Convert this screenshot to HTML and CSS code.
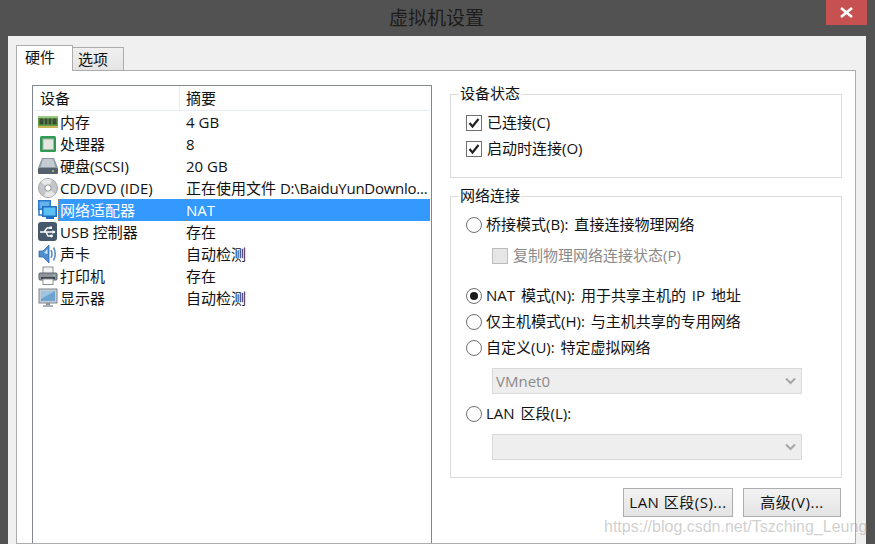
FILE: index.html
```html
<!DOCTYPE html>
<html lang="zh-CN">
<head>
<meta charset="utf-8">
<title>虚拟机设置</title>
<link rel="stylesheet" href="styles.css">
</head>
<body>
<header class="titlebar">
  <div class="title">虚拟机设置</div>
  <div class="close"><svg width="15" height="11" viewBox="0 0 15 11"><path d="M2 1 L13 10 M13 1 L2 10" stroke="#fff" stroke-width="2.6" fill="none"/></svg></div>
</header>
<main class="dialog">
  <nav class="tabs">
    <div class="tab active">硬件</div>
    <div class="tab">选项</div>
  </nav>
  <section class="pane">
    <div class="list">
      <div class="list-head"><div class="h1">设备</div><div class="h2">摘要</div></div>
      <div class="row">
        <svg class="icon" viewBox="0 0 20 20"><rect x="0" y="4" width="20" height="12" fill="#5fa043"/><rect x="0" y="4" width="20" height="2" fill="#9cc97f"/><rect x="1.500" y="6.500" width="4" height="6" fill="#3d4a3a"/><rect x="6.500" y="6.500" width="3" height="6" fill="#3d4a3a"/><rect x="10.500" y="6.500" width="3" height="6" fill="#3d4a3a"/><rect x="14.500" y="6.500" width="4" height="6" fill="#3d4a3a"/><rect x="0" y="14" width="20" height="2" fill="#c9b45c"/></svg>
        <div class="name">内存</div><div class="val">4 GB</div>
      </div>
      <div class="row">
        <svg class="icon" viewBox="0 0 20 20"><rect x="2" y="2" width="16" height="16" rx="1.500" fill="#2f9a55"/><rect x="5" y="5" width="10.500" height="10.500" fill="#e4e6df" stroke="#a8b5a4"/></svg>
        <div class="name">处理器</div><div class="val">8</div>
      </div>
      <div class="row">
        <svg class="icon" viewBox="0 0 20 20"><path d="M4 2 H16 L20 12 H0 Z" fill="#8e98a2"/><path d="M5 3 H15 L17.500 11 H2.500 Z" fill="#c3cad1"/><rect x="0" y="12" width="20" height="6" rx="1" fill="#56606b"/><circle cx="15" cy="15" r="1" fill="#7fe07f"/></svg>
        <div class="name">硬盘(SCSI)</div><div class="val">20 GB</div>
      </div>
      <div class="row">
        <svg class="icon" viewBox="0 0 20 20"><circle cx="10" cy="10" r="9.500" fill="#c4c7ca" stroke="#a0a2a4"/><path d="M10 10 L3 4 A9 9 0 0 1 14 2 Z" fill="#e6e8ea"/><path d="M10 10 L17 16 A9 9 0 0 1 6 18 Z" fill="#e4e6e8"/><circle cx="10" cy="10" r="3.200" fill="#fff" stroke="#999"/></svg>
        <div class="name">CD/DVD (IDE)</div><div class="val">正在使用文件 <span class="path">D:\BaiduYunDownlo...</span></div>
      </div>
      <div class="row selected">
        <svg class="icon" viewBox="0 0 20 20"><rect x="0" y="0" width="13" height="10" fill="#2a78c8"/><rect x="1.500" y="1.500" width="10" height="7" fill="#66b2ee"/><rect x="4" y="6" width="15" height="11" fill="#1f6fc0"/><rect x="5.500" y="7.500" width="12" height="8" fill="#5cc0f5"/><rect x="8" y="17" width="8" height="2" fill="#1f6fc0"/><path d="M1 10 V15 H4" stroke="#2a78c8" stroke-width="1.500" fill="none"/></svg>
        <div class="name">网络适配器</div><div class="val">NAT</div>
      </div>
      <div class="row">
        <svg class="icon" viewBox="0 0 20 20"><rect x="0" y="0" width="19" height="19" rx="3" fill="#46586c"/><path d="M2 10 H17 M6 10 L9 6 H12 M8 10 L10 14 H13" stroke="#fff" stroke-width="1.400" fill="none"/><path d="M17.500 10 L14.500 8 V12 Z" fill="#fff"/><rect x="11.500" y="4.500" width="2.500" height="2.500" fill="#fff"/><circle cx="13.500" cy="14" r="1.400" fill="#fff"/></svg>
        <div class="name">USB 控制器</div><div class="val">存在</div>
      </div>
      <div class="row">
        <svg class="icon" viewBox="0 0 20 20"><path d="M1 7 H5 L11 1 V19 L5 13 H1 Z" fill="#4f8fd0" stroke="#2f6aa8" stroke-width=".8"/><path d="M6 9 L9.500 5 V10 Z" fill="#cfe4f7"/><path d="M13 6 Q15 10 13 14 M15.500 3.500 Q19 10 15.500 16.500" stroke="#5f8cbc" stroke-width="1.600" fill="none"/></svg>
        <div class="name">声卡</div><div class="val">自动检测</div>
      </div>
      <div class="row">
        <svg class="icon" viewBox="0 0 20 20"><rect x="5" y="1" width="10" height="7" fill="#f2f2f2" stroke="#8b8f94"/><rect x="1" y="7" width="18" height="7" rx="1" fill="#8d949b" stroke="#5e656c"/><rect x="3" y="11" width="14" height="2" fill="#3c4248"/><rect x="5" y="13" width="10" height="5.500" fill="#fafafa" stroke="#8b8f94"/><rect x="15" y="8.500" width="2" height="1.500" fill="#7fd07f"/></svg>
        <div class="name">打印机</div><div class="val">存在</div>
      </div>
      <div class="row">
        <svg class="icon" viewBox="0 0 20 20"><rect x="1" y="1" width="18" height="14" fill="#c6ccd2" stroke="#7e8790"/><rect x="3" y="3" width="14" height="10" fill="#6da3cf"/><path d="M3 3 H17 L3 11 Z" fill="#9dc4e2"/><rect x="8" y="15" width="4" height="2" fill="#8c949c"/><rect x="5" y="17" width="10" height="2" fill="#aab1b8"/></svg>
        <div class="name">显示器</div><div class="val">自动检测</div>
      </div>
    </div>
    <div class="side">
      <fieldset class="group state">
        <legend>设备状态</legend>
        <div class="opt"><span class="check"><svg width="14" height="14" viewBox="0 0 14 14"><path d="M2.500 7 L5.500 10.500 L11.500 3" stroke="#222" stroke-width="2.200" fill="none"/></svg></span>已连接(C)</div>
        <div class="opt"><span class="check"><svg width="14" height="14" viewBox="0 0 14 14"><path d="M2.500 7 L5.500 10.500 L11.500 3" stroke="#222" stroke-width="2.200" fill="none"/></svg></span>启动时连接(O)</div>
      </fieldset>
      <fieldset class="group net">
        <legend>网络连接</legend>
        <div class="opt"><span class="radio"></span>桥接模式(B): 直接连接物理网络</div>
        <div class="opt sub disabled"><span class="check off"></span>复制物理网络连接状态(P)</div>
        <div class="opt nat"><span class="radio on"></span>NAT 模式(N): 用于共享主机的 IP 地址</div>
        <div class="opt"><span class="radio"></span>仅主机模式(H): 与主机共享的专用网络</div>
        <div class="opt"><span class="radio"></span>自定义(U): 特定虚拟网络</div>
        <div class="select">VMnet0<svg class="chev" width="11" height="8" viewBox="0 0 11 8"><path d="M1 1.500 L5.500 6 L10 1.500" stroke="#a6a6a6" stroke-width="2" fill="none"/></svg></div>
        <div class="opt after-select"><span class="radio"></span>LAN 区段(L):</div>
        <div class="select"><svg class="chev" width="11" height="8" viewBox="0 0 11 8"><path d="M1 1.500 L5.500 6 L10 1.500" stroke="#a6a6a6" stroke-width="2" fill="none"/></svg></div>
      </fieldset>
      <div class="buttons">
        <div class="btn lan">LAN 区段(S)...</div>
        <div class="btn adv">高级(V)...</div>
      </div>
    </div>
  </section>
</main>
<div class="watermark">https://blog.csdn.net/Tszching_Leung</div>
</body>
</html>
```
FILE: styles.css
```css
* { box-sizing: border-box; }
html, body { margin: 0; height: 544px; overflow: hidden; }
body {
  position: relative;
  display: flex;
  flex-direction: column;
  background: #525252;
  font: 15px/22px "Open Sans", "Noto Sans CJK SC", sans-serif;
  color: #111;
}
.titlebar {
  height: 36px;
  flex: none;
  position: relative;
  display: flex;
  justify-content: center;
}
.title { font-size: 19px; line-height: 36px; color: #1c1c1c; margin-left: -2px; }
.close {
  position: absolute;
  top: 0;
  left: 826px;
  width: 41px;
  height: 25px;
  background: #c75050;
  display: flex;
  align-items: center;
  justify-content: center;
}
.dialog {
  flex: 1;
  min-height: 0;
  width: 858px;
  margin-left: 8px;
  background: #f0f0f0;
  padding: 9px 10px 0 8px;
  display: flex;
  flex-direction: column;
}
.tabs { display: flex; align-items: flex-end; height: 26px; flex: none; position: relative; z-index: 1; }
.tab {
  width: 51px;
  height: 23px;
  margin-bottom: 1px;
  border: 1px solid #acacac;
  border-left: 0;
  border-bottom: 0;
  background: linear-gradient(#f0f0f0, #e5e5e5);
  padding-left: 5px;
  line-height: 23px;
}
.tab.active {
  width: 57px;
  height: 26px;
  margin-bottom: 0;
  border-left: 1px solid #acacac;
  background: #fff;
  padding-left: 8px;
  line-height: 22px;
}
.pane {
  flex: 1;
  min-height: 0;
  margin-top: -1px;
  background: #fff;
  border: 1px solid #acacac;
  padding: 13px 13px 0 15px;
  display: flex;
  gap: 18px;
  overflow: hidden;
}
.list {
  width: 400px;
  height: 480px;
  flex: none;
  margin-top: 1px;
  border: 1px solid #828790;
  background: #fff;
  padding: 0 1px;
}
.list-head {
  display: flex;
  height: 25px;
  border-bottom: 1px solid #e5ecf5;
  line-height: 25px;
}
.h1 { width: 146px; padding-left: 6px; border-right: 1px solid #e5ecf5; }
.h2 { padding-left: 6px; }
.row {
  height: 22px;
  display: flex;
  align-items: center;
}
.icon { width: 20px; height: 20px; flex: none; margin-left: 4px; }
.name { width: 128px; height: 22px; flex: none; padding-left: 2px; white-space: nowrap; }
.val { white-space: nowrap; flex: 1; height: 22px; }
.path { letter-spacing: -.26px; }
.selected .name { color: #fff; background: #3399ff; border: 1px dotted #c8793a; border-right: 0; line-height: 20px; padding-left: 1px; }
.selected .val { color: #fff; background: #3399ff; border: 1px dotted #c8793a; border-left: 0; line-height: 20px; }
.side { width: 392px; flex: none; display: flex; flex-direction: column; }
.group {
  margin: 0;
  border: 1px solid #dcdcdc;
  padding: 6px 15px 0;
  min-width: 0;
}
.group legend { padding: 0 1px; margin-left: -7px; height: 20px; line-height: 18px; }
.state { padding-bottom: 15px; }
.net { margin-top: 8px; padding-bottom: 17px; }
.opt { height: 26px; padding-bottom: 2px; display: flex; align-items: center; white-space: pre; word-spacing: 2px; }
.check {
  width: 16px;
  height: 16px;
  flex: none;
  border: 1px solid #707070;
  background: #fff;
  margin: 2px 5px 0 0;
  display: flex;
  align-items: center;
  justify-content: center;
}
.check.off { background: #e6e6e6; border-color: #bcbcbc; }
.radio {
  width: 16px;
  height: 16px;
  flex: none;
  border: 1px solid #707070;
  border-radius: 50%;
  background: #fff;
  margin: 2px 4px 0 0;
  display: flex;
  align-items: center;
  justify-content: center;
}
.radio.on::after {
  content: "";
  width: 8px;
  height: 8px;
  border-radius: 50%;
  background: #1a1a1a;
}
.sub { margin-top: 5px; margin-left: 26px; }
.disabled { color: #8a8a8a; }
.nat { margin-top: 14px; }
.after-select { margin-top: 7px; }
.select {
  margin: 7px 0 0 26px;
  width: 310px;
  height: 26px;
  border: 1px solid #d9d9d9;
  background: #eeeeee;
  color: #8a8a8a;
  padding: 0 5px 0 3px;
  line-height: 24px;
  display: flex;
  align-items: center;
}
.chev { margin-left: auto; }
.buttons { display: flex; justify-content: flex-end; gap: 10px; margin-top: 10px; padding-right: 1px; }
.btn {
  height: 29px;
  border: 1px solid #adadad;
  background: linear-gradient(#f2f2f2, #e4e4e4);
  text-align: center;
  line-height: 27px;
  white-space: pre;
  letter-spacing: .5px;
}
.lan { width: 110px; }
.adv { width: 98px; }
.watermark {
  position: absolute;
  left: 604px;
  top: 515px;
  font: 16px/24px "Liberation Sans", sans-serif;
  color: rgba(160, 160, 160, .5);
  white-space: nowrap;
}
```
